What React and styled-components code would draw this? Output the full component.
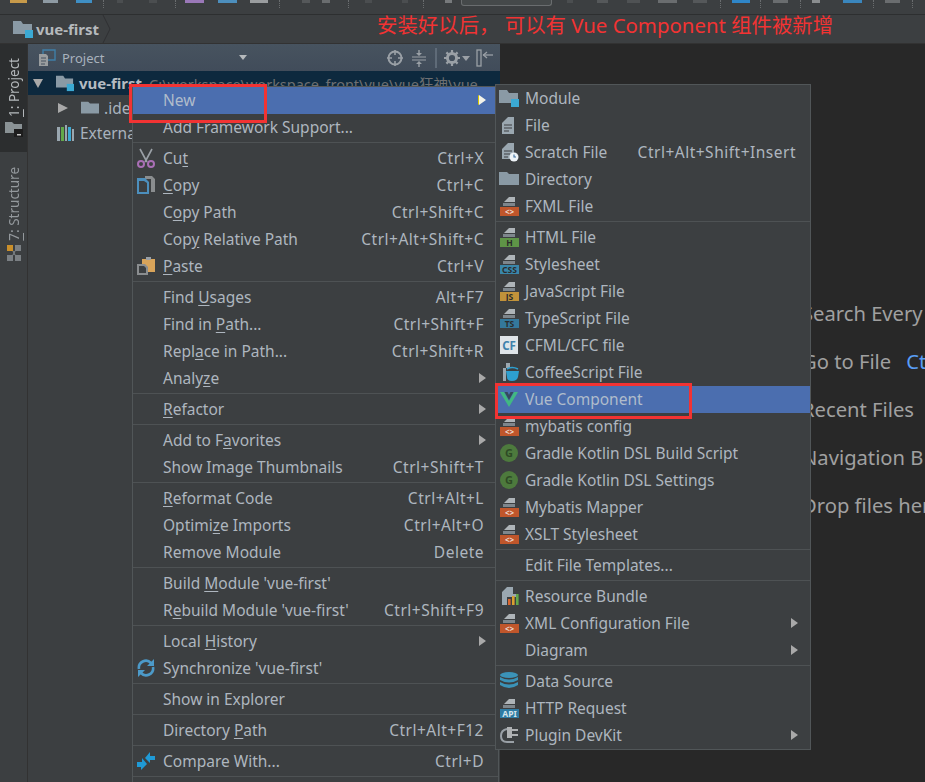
import React from "react";
import styled, { createGlobalStyle } from "styled-components";

const FONT = `"Noto Sans", "Open Sans", sans-serif`;

const GlobalStyle = createGlobalStyle`
  html, body {
    margin: 0;
    padding: 0;
    background: #282828;
    overflow: hidden;
  }
`;

const U = styled.span`
  text-decoration: underline;
  text-underline-offset: 2px;
`;

/* file-type icons */
const Doc = ({ color, label, fg = "#2b2b2b", size = 8.5 }) => (
  <svg width="20" height="20" viewBox="0 0 20 20">
    <path d="M10 1h6v5H5z" fill="#aeb4b8" />
    <rect x="4" y="7" width="12" height="3" fill="#7e868c" />
    <rect x="1" y="11" width="19" height="9" fill={color} />
    <text x="10.5" y="18.6" textAnchor="middle" fontSize={size} fontWeight="700" fontFamily={FONT} fill={fg}>
      {label}
    </text>
  </svg>
);

const XmlDoc = () => <Doc color="#c0562b" label="<>" fg="#ecd9cf" size={8} />;

const ModuleIcon = ({ size = 20 }) => (
  <svg width={size} height={size} viewBox="0 0 20 20">
    <path d="M0 2h8l2 3h9v10H0z" fill="#8a9aa5" />
    <rect x="12" y="11" width="8" height="8" fill="#3ba9d3" />
  </svg>
);

const FolderIcon = ({ size = 20 }) => (
  <svg width={size} height={size} viewBox="0 0 20 20">
    <path d="M0 3h8l2 2h10v11H0z" fill="#8a9aa5" />
  </svg>
);

const FileIcon = () => (
  <svg width="20" height="20" viewBox="0 0 20 20">
    <path d="M9 2h6v17H3V8z" fill="#9aa7b0" />
    <path d="M5 10h8M5 13h8M5 16h5" stroke="#3c3f41" strokeWidth="1.2" />
  </svg>
);

const ScratchIcon = () => (
  <svg width="20" height="20" viewBox="0 0 20 20">
    <path d="M9 1h6v16H3V7z" fill="#9aa7b0" />
    <path d="M5 9h8M5 12h6M5 15h4" stroke="#3c3f41" strokeWidth="1.2" />
    <circle cx="15" cy="15" r="4.5" fill="#eef3f7" />
    <path d="M15 12.5V15h2" stroke="#3c6e9e" strokeWidth="1.1" fill="none" />
  </svg>
);

const CfIcon = () => (
  <svg width="20" height="20" viewBox="0 0 20 20">
    <rect x="1" y="1" width="18" height="18" fill="#dfe4e8" />
    <text x="10" y="15" textAnchor="middle" fontSize="11.5" fontWeight="700" fontFamily={FONT} fill="#3f82ad">
      CF
    </text>
  </svg>
);

const CoffeeIcon = () => (
  <svg width="20" height="20" viewBox="0 0 20 20">
    <path d="M7 1h4v5H4v13h3z" fill="#9aa7b0" />
    <path d="M7 9h13l-1 6q-1 4-6 4t-5-4z" fill="#2d9fd0" />
    <path d="M8 7q5-3 11 0" stroke="#2d9fd0" strokeWidth="1.5" fill="none" />
  </svg>
);

const VueIcon = () => (
  <svg width="20" height="20" viewBox="0 0 20 20">
    <path d="M1 3h4l5 9 5-9h4L10 18z" fill="#41b883" />
    <path d="M5.5 3h3L10 6l1.5-3h3L10 11z" fill="#35495e" />
  </svg>
);

const GradleIcon = () => (
  <svg width="20" height="20" viewBox="0 0 20 20">
    <circle cx="10" cy="10" r="9" fill="#4d7a3d" />
    <text x="10" y="14" textAnchor="middle" fontSize="11" fontWeight="700" fontFamily={FONT} fill="#2e4a25">
      G
    </text>
  </svg>
);

const BundleIcon = () => (
  <svg width="20" height="20" viewBox="0 0 20 20">
    <path d="M8 1h6v7h5v3H8v8H3V6z" fill="#9aa7b0" />
    <rect x="9" y="13" width="2.6" height="6" fill="#d9662f" />
    <rect x="13" y="10" width="2.6" height="9" fill="#d9a030" />
    <rect x="17" y="8" width="2.6" height="11" fill="#62a84a" />
  </svg>
);

const DataIcon = () => (
  <svg width="20" height="20" viewBox="0 0 20 20">
    <g fill="#3b93b8">
      <ellipse cx="10" cy="4" rx="9" ry="3" />
      <path d="M1 6q9 5 18 0v3q-9 5-18 0z" />
      <path d="M1 11q9 5 18 0v3q-9 6-18 0z" />
    </g>
  </svg>
);

const PluginIcon = () => (
  <svg width="20" height="20" viewBox="0 0 20 20">
    <path d="M8 4q-6 1-6 7 0 6 6 6h7" stroke="#9aa0a6" strokeWidth="2" fill="none" />
    <path d="M8 2h5v11H8z" fill="#afb1b3" />
    <path d="M13 4h6v2h-6zM13 9h6v2h-6z" fill="#afb1b3" />
  </svg>
);

const CutIcon = () => (
  <svg width="20" height="20" viewBox="0 0 20 20">
    <path d="M4 1l7 13M16 1L9 14" stroke="#9aa0a6" strokeWidth="1.6" fill="none" />
    <circle cx="5" cy="16" r="3" fill="none" stroke="#a96fb5" strokeWidth="2" />
    <circle cx="15" cy="16" r="3" fill="none" stroke="#a96fb5" strokeWidth="2" />
  </svg>
);

const CopyIcon = () => (
  <svg width="20" height="20" viewBox="0 0 20 20">
    <path d="M9 1h7l3 3v13h-4V4H9z" fill="#8a8d8f" />
    <path d="M1 3h8l4 4v12H1z" fill="#4c8fbd" />
    <path d="M3 6h5l3 2v9H3z" fill="#3c3f41" />
  </svg>
);

const PasteIcon = () => (
  <svg width="20" height="20" viewBox="0 0 20 20">
    <rect x="6" y="3" width="13" height="13" fill="#d9a45a" />
    <rect x="10" y="1" width="5" height="3" fill="#9aa0a6" />
    <path d="M1 8h8l3 3v8H1z" fill="#8a8d8f" />
    <path d="M3 10h5l2 2v5H3z" fill="#3c3f41" />
  </svg>
);

const SyncIcon = () => (
  <svg width="20" height="20" viewBox="0 0 20 20">
    <path d="M3 11a7 7 0 0 1 12-6" stroke="#4c9ac9" strokeWidth="2.6" fill="none" />
    <path d="M17 9a7 7 0 0 1-12 6" stroke="#4c9ac9" strokeWidth="2.6" fill="none" />
    <path d="M18 1v7h-7zM2 19v-7h7z" fill="#4c9ac9" />
  </svg>
);

const CompareIcon = () => (
  <svg width="20" height="20" viewBox="0 0 20 20">
    <path d="M1 11h5V7l5 6-6 6v-3H1z" fill="#1f9ad6" />
    <path d="M19 5h-5V1L9 7l5 5V9h5z" fill="#1f9ad6" />
  </svg>
);

const LibIcon = () => (
  <svg width="18" height="18" viewBox="0 0 18 18">
    <rect x="0" y="3" width="3" height="14" fill="#9aa7b0" />
    <rect x="4" y="3" width="3" height="14" fill="#62a84a" />
    <rect x="8" y="1" width="2" height="16" fill="#9aa7b0" />
    <rect x="11" y="3" width="3" height="14" fill="#3ba9d3" />
    <rect x="15" y="5" width="2" height="12" fill="#9aa7b0" />
  </svg>
);

const StripFolder = () => (
  <svg width="18" height="16" viewBox="0 0 18 16">
    <path d="M0 1h7l2 2h8v9H0z" fill="#8a9295" />
    <rect x="9" y="8" width="9" height="8" fill="#1d1d1d" />
    <rect x="12" y="13" width="4" height="1.5" fill="#c8c8c8" />
  </svg>
);

const StructureIcon = () => (
  <svg width="16" height="16" viewBox="0 0 16 16">
    <rect x="1" y="0" width="6" height="6" fill="#c98f2b" />
    <path d="M9 0h6v6H9zM1 10h6v6H1zM9 10h6v6H9z" fill="#7b8084" />
    <path d="M7 6l2 4M9 6l-2 4" stroke="#7b8084" strokeWidth="1.2" />
  </svg>
);

const ProjectViewIcon = () => (
  <svg width="18" height="18" viewBox="0 0 18 18">
    <path d="M5 1h12v10H5z" fill="none" stroke="#3f7fa8" strokeWidth="1.4" />
    <path d="M1 5h7l2 2v10H1z" fill="#9a9d9f" />
    <path d="M3 9h5M3 12h5M3 15h4" stroke="#44505f" strokeWidth="1" />
  </svg>
);

const TargetIcon = () => (
  <svg width="18" height="18" viewBox="0 0 18 18">
    <circle cx="9" cy="9" r="6.5" fill="none" stroke="#9aa0a6" strokeWidth="2" />
    <path d="M9 1v5M9 12v5M1 9h5M12 9h5" stroke="#9aa0a6" strokeWidth="1.6" />
  </svg>
);

const CollapseIcon = () => (
  <svg width="18" height="18" viewBox="0 0 18 18">
    <path d="M2 8h14M2 11h14" stroke="#9aa0a6" strokeWidth="1" />
    <path d="M9 1v4M9 14v4" stroke="#9aa0a6" strokeWidth="1.4" />
    <path d="M6 4h6L9 7zM6 15h6l-3-3z" fill="#9aa0a6" />
  </svg>
);

const GearIcon = () => (
  <svg width="26" height="18" viewBox="0 0 26 18">
    <circle cx="8" cy="9" r="4.6" fill="none" stroke="#9aa0a6" strokeWidth="3" />
    <path
      d="M8 1v3M8 14v3M0 9h3M13 9h3M2.4 3.4l2 2M11.6 12.6l2 2M13.6 3.4l-2 2M4.4 12.6l-2 2"
      stroke="#9aa0a6"
      strokeWidth="2.2"
    />
    <path d="M18 7h8l-4 5z" fill="#9aa0a6" />
  </svg>
);

const HideIcon = () => (
  <svg width="18" height="18" viewBox="0 0 18 18">
    <rect x="1" y="1" width="4" height="16" fill="none" stroke="#9aa0a6" strokeWidth="1.3" />
    <path d="M7 6h10" stroke="#9aa0a6" strokeWidth="1.3" />
    <path d="M11 3 7.5 6 11 9" stroke="#9aa0a6" strokeWidth="1.3" fill="none" />
  </svg>
);

/* clipped toolbar above the nav bar: gap, width and colour of each stub */
const TOOLBAR = [
  { gap: 10, w: 17, c: "#c79a4a" },
  { gap: 16, w: 15, c: "#8e9aa3" },
  { gap: 18, w: 16, c: "#3f8fc4" },
  { gap: 11, sep: true },
  { gap: 13, w: 6, c: "#4b4e50" },
  { gap: 26, w: 8, c: "#4b4e50" },
  { gap: 18, sep: true },
  { gap: 9, w: 19, c: "#9a78b8" },
  { gap: 14, w: 19, c: "#4d8fbd" },
  { gap: 13, w: 18, c: "#9a9d9f" },
  { gap: 11, sep: true },
  { gap: 22, w: 8, c: "#55585a" },
  { gap: 12, w: 8, c: "#6a6d6f" },
  { gap: 18, sep: true },
  { gap: 16, w: 7, c: "#4b4e50" },
  { gap: 30, w: 6, c: "#4b4e50" },
  { gap: 15, sep: true },
  { gap: 21, w: 7, c: "#777a7c" },
  { gap: 9, input: true },
  { gap: 15, w: 6, c: "#4b4e50" },
  { gap: 24, w: 11, c: "#55585a" },
  { gap: 19, w: 13, c: "#4f5254" },
  { gap: 18, w: 19, c: "#6a6d6f" },
  { gap: 16, w: 14, c: "#55585a" },
  { gap: 13, sep: true },
  { gap: 11, w: 18, c: "#2f86c8" },
  { gap: 10, sep: true },
  { gap: 12, w: 15, c: "#6a6d6f" },
  { gap: 12, sep: true },
  { gap: 11, w: 8, c: "#8a8d8f" },
  { gap: 23, w: 19, c: "#3a86bd" },
  { gap: 11, sep: true },
  { gap: 11, w: 15, c: "#6a6d6f" },
  { gap: 12, sep: true },
];

const LEFT_MENU = [
  [
    { label: "New", active: true, arrow: true, cursor: true },
    { label: "Add Framework Support..." },
  ],
  [
    { icon: <CutIcon />, label: <>Cu<U>t</U></>, key_: "Ctrl+X" },
    { icon: <CopyIcon />, label: <><U>C</U>opy</>, key_: "Ctrl+C" },
    { label: <>C<U>o</U>py Path</>, key_: "Ctrl+Shift+C" },
    { label: <>Cop<U>y</U> Relative Path</>, key_: "Ctrl+Alt+Shift+C" },
    { icon: <PasteIcon />, label: <><U>P</U>aste</>, key_: "Ctrl+V" },
  ],
  [
    { label: <>Find <U>U</U>sages</>, key_: "Alt+F7" },
    { label: <>Find in <U>P</U>ath...</>, key_: "Ctrl+Shift+F" },
    { label: <>Repl<U>a</U>ce in Path...</>, key_: "Ctrl+Shift+R" },
    { label: <>Analy<U>z</U>e</>, arrow: true },
  ],
  [{ label: <><U>R</U>efactor</>, arrow: true }],
  [
    { label: <>Add to F<U>a</U>vorites</>, arrow: true },
    { label: "Show Image Thumbnails", key_: "Ctrl+Shift+T" },
  ],
  [
    { label: <><U>R</U>eformat Code</>, key_: "Ctrl+Alt+L" },
    { label: <>Optimi<U>z</U>e Imports</>, key_: "Ctrl+Alt+O" },
    { label: "Remove Module", key_: "Delete" },
  ],
  [
    { label: <>Build <U>M</U>odule 'vue-first'</> },
    { label: <>R<U>e</U>build Module 'vue-first'</>, key_: "Ctrl+Shift+F9" },
  ],
  [
    { label: <>Local <U>H</U>istory</>, arrow: true },
    { icon: <SyncIcon />, label: "Synchronize 'vue-first'" },
  ],
  [{ label: "Show in Explorer" }],
  [{ label: <>Directory <U>P</U>ath</>, key_: "Ctrl+Alt+F12" }],
  [{ icon: <CompareIcon />, label: "Compare With...", key_: "Ctrl+D" }],
  [],
];

const RIGHT_MENU = [
  [
    { icon: <ModuleIcon />, label: "Module" },
    { icon: <FileIcon />, label: "File" },
    { icon: <ScratchIcon />, label: "Scratch File", key_: "Ctrl+Alt+Shift+Insert" },
    { icon: <FolderIcon />, label: "Directory" },
    { icon: <XmlDoc />, label: "FXML File" },
  ],
  [
    { icon: <Doc color="#5f9447" label="H" />, label: "HTML File" },
    { icon: <Doc color="#3a87ab" label="CSS" />, label: "Stylesheet" },
    { icon: <Doc color="#c1923a" label="JS" />, label: "JavaScript File" },
    { icon: <Doc color="#34789c" label="TS" />, label: "TypeScript File" },
    { icon: <CfIcon />, label: "CFML/CFC file" },
    { icon: <CoffeeIcon />, label: "CoffeeScript File" },
    { icon: <VueIcon />, label: "Vue Component", active: true },
    { icon: <XmlDoc />, label: "mybatis config" },
    { icon: <GradleIcon />, label: "Gradle Kotlin DSL Build Script" },
    { icon: <GradleIcon />, label: "Gradle Kotlin DSL Settings" },
    { icon: <XmlDoc />, label: "Mybatis Mapper" },
    { icon: <XmlDoc />, label: "XSLT Stylesheet" },
  ],
  [{ label: "Edit File Templates..." }],
  [
    { icon: <BundleIcon />, label: "Resource Bundle" },
    { icon: <XmlDoc />, label: "XML Configuration File", arrow: true },
    { label: "Diagram", arrow: true },
  ],
  [
    { icon: <DataIcon />, label: "Data Source" },
    { icon: <Doc color="#2f7ba3" label="API" fg="#d5e4ec" />, label: "HTTP Request" },
    { icon: <PluginIcon />, label: "Plugin DevKit", arrow: true },
  ],
];

const HINTS = [
  { text: "Search Every" },
  { text: "Go to File", key_: "Ctrl" },
  { text: "Recent Files" },
  { text: "Navigation B" },
  { text: "Drop files her" },
];

const Menu = ({ groups, slot = 30, className }) => (
  <MenuBox className={className}>
    {groups.map((group, i) => (
      <MenuGroup key={i}>
        {group.map((item, j) => (
          <Row key={j} $active={item.active}>
            <IconSlot $w={slot}>{item.icon}</IconSlot>
            <Label>{item.label}</Label>
            {item.key_ && <Shortcut>{item.key_}</Shortcut>}
            {item.arrow && <Arrow $cursor={item.cursor} />}
          </Row>
        ))}
      </MenuGroup>
    ))}
  </MenuBox>
);

const App = () => {
  return (
    <Screen>
      <GlobalStyle />
      <TopToolbar>
        {TOOLBAR.map((t, i) => {
          if (t.sep) return <ToolSep key={i} $gap={t.gap} />;
          if (t.input) return <ToolInput key={i} $gap={t.gap} />;
          return <ToolStub key={i} $gap={t.gap} $w={t.w} $c={t.c} />;
        })}
      </TopToolbar>
      <NavBar>
        <ModuleIcon />
        <NavTitle>vue-first</NavTitle>
        <NavChevron width="10" height="28" viewBox="0 0 10 28">
          <path d="M1 0l7 14-7 14" fill="none" stroke="#2f3133" strokeWidth="1" />
        </NavChevron>
        <Note>安装好以后， 可以有 Vue Component 组件被新增</Note>
      </NavBar>
      <Main>
        <SideStrip>
          <SideTab $active>
            <SideLabel>
              <U>1</U>: Project
            </SideLabel>
            <StripFolder />
          </SideTab>
          <SideTab>
            <SideLabel>
              <U>7</U>: Structure
            </SideLabel>
            <StructureIcon />
          </SideTab>
        </SideStrip>
        <ProjectPanel>
          <PanelHeader>
            <ProjectViewIcon />
            <PanelTitle>Project</PanelTitle>
            <Caret />
            <PanelTools>
              <TargetIcon />
              <CollapseIcon />
              <ToolDivider />
              <GearIcon />
              <HideIcon />
            </PanelTools>
          </PanelHeader>
          <TreeRow $selected $indent={5}>
            <TreeArrow $open />
            <ModuleIcon size={18} />
            <TreeStrong>vue-first</TreeStrong>
            <TreePath>C:\workspace\workspace_front\vue\vue狂神\vue</TreePath>
          </TreeRow>
          <TreeRow $indent={30}>
            <TreeArrow />
            <FolderIcon size={18} />
            <TreeText>.idea</TreeText>
          </TreeRow>
          <TreeRow $indent={29}>
            <LibIcon />
            <TreeText>External Libraries</TreeText>
          </TreeRow>
        </ProjectPanel>
        <Editor>
          {HINTS.map((h) => (
            <Hint key={h.text}>
              {h.text}
              {h.key_ && <HintKey>{h.key_}</HintKey>}
            </Hint>
          ))}
        </Editor>
      </Main>
      <LeftMenu groups={LEFT_MENU} />
      <RightMenu groups={RIGHT_MENU} slot={29} />
      <NewMark />
      <VueMark />
    </Screen>
  );
};

const Screen = styled.div`
  position: relative;
  width: 925px;
  height: 782px;
  overflow: hidden;
  display: flex;
  flex-direction: column;
  font-family: ${FONT};
  background: #282828;
`;

const TopToolbar = styled.div`
  height: 14px;
  flex: none;
  display: flex;
  background: #3c3f41;
  border-bottom: 1px solid #2d2f30;
  overflow: hidden;
`;

const ToolStub = styled.span`
  flex: none;
  width: ${(p) => p.$w}px;
  height: 3px;
  margin-left: ${(p) => p.$gap}px;
  background: ${(p) => p.$c};
`;

const ToolSep = styled.span`
  flex: none;
  height: 8px;
  margin-left: ${(p) => p.$gap}px;
  border-left: 1px dotted #6a6d6f;
`;

const ToolInput = styled.span`
  flex: none;
  width: 91px;
  height: 6px;
  margin-left: ${(p) => p.$gap}px;
  box-sizing: border-box;
  border: 1px solid #6a6d6f;
  border-top: none;
  border-radius: 0 0 3px 3px;
  background: #45494a;
`;

const NavBar = styled.div`
  height: 28px;
  flex: none;
  display: flex;
  align-items: center;
  gap: 3px;
  padding-left: 13px;
  background: #3c3f41;
  border-bottom: 1px solid #323232;
`;

const NavTitle = styled.span`
  font-size: 15px;
  font-weight: 700;
  color: #b5b9bc;
`;

const NavChevron = styled.svg`
  flex: none;
`;

const Note = styled.span`
  margin: 0 0 11px 262px;
  font-size: 20.4px;
  color: #f23333;
  font-family: "Noto Sans", "Noto Sans CJK SC", sans-serif;
  white-space: nowrap;
`;

const Main = styled.div`
  flex: 1;
  display: flex;
  min-height: 0;
`;

const SideStrip = styled.div`
  width: 27px;
  flex: none;
  background: #3c3f41;
  border-right: 1px solid #323232;
`;

const SideTab = styled.div`
  height: ${(p) => (p.$active ? "108px" : "118px")};
  box-sizing: border-box;
  padding-top: ${(p) => (p.$active ? "14px" : "15px")};
  display: flex;
  flex-direction: column;
  align-items: center;
  gap: 4px;
  background: ${(p) => (p.$active ? "#2c2e2f" : "transparent")};
  color: ${(p) => (p.$active ? "#b4b8bb" : "#94999d")};
`;

const SideLabel = styled.span`
  writing-mode: vertical-rl;
  transform: rotate(180deg);
  font-size: 13.5px;
  white-space: nowrap;
`;

const ProjectPanel = styled.div`
  width: 472px;
  flex: none;
  background: #3c3f41;
`;

const PanelHeader = styled.div`
  height: 27px;
  display: flex;
  align-items: center;
  gap: 6px;
  padding-left: 10px;
  background: linear-gradient(#47535f, #414c5a);
`;

const PanelTitle = styled.span`
  width: 171px;
  flex: none;
  font-size: 13px;
  color: #a9b2bd;
`;

const Caret = styled.span`
  width: 0;
  height: 0;
  border-left: 4px solid transparent;
  border-right: 4px solid transparent;
  border-top: 5px solid #b5b9bc;
`;

const PanelTools = styled.div`
  margin-left: auto;
  display: flex;
  align-items: center;
  gap: 6px;
  padding-right: 6px;
`;

const ToolDivider = styled.span`
  width: 2px;
  height: 20px;
  margin: 0 1px;
  background: #5f6b78;
`;

const TreeRow = styled.div`
  height: ${(p) => (p.$selected ? "24px" : "25px")};
  display: flex;
  align-items: center;
  gap: 5px;
  padding-left: ${(p) => p.$indent}px;
  background: ${(p) => (p.$selected ? "#0d293e" : "transparent")};
  white-space: nowrap;
  overflow: hidden;
`;

const TreeArrow = styled.span`
  width: 0;
  height: 0;
  margin-right: 8px;
  ${(p) =>
    p.$open
      ? `border-left: 5.5px solid transparent; border-right: 5.5px solid transparent; border-top: 9px solid #a9a9a9;`
      : `border-top: 5px solid transparent; border-bottom: 5px solid transparent; border-left: 10px solid #a9a9a9;`}
`;

const TreeStrong = styled.span`
  font-size: 15px;
  font-weight: 700;
  color: #b5bcc2;
`;

const TreeText = styled.span`
  font-size: 15.5px;
  color: #a9b2bd;
`;

const TreePath = styled.span`
  margin-left: 2px;
  font-size: 14.5px;
  color: #6e7072;
  font-family: "Noto Sans", "Noto Sans CJK SC", sans-serif;
`;

const Editor = styled.div`
  flex: 1;
  display: flex;
  flex-direction: column;
  gap: 20px;
  padding: 255px 0 0 302px;
  background: #282828;
  overflow: hidden;
`;

const Hint = styled.div`
  height: 28px;
  line-height: 28px;
  font-size: 20.2px;
  color: #a0a0a0;
  white-space: nowrap;
`;

const HintKey = styled.span`
  margin-left: 15px;
  color: #589df6;
`;

const MenuBox = styled.div`
  position: absolute;
  background: #3c3f41;
  border: 1px solid #515658;
  box-sizing: border-box;
`;

const LeftMenu = styled(Menu)`
  left: 132px;
  top: 86px;
  width: 367px;
  height: 700px;
`;

const RightMenu = styled(Menu)`
  left: 495px;
  top: 84px;
  width: 316px;
  height: 666px;
`;

const MenuGroup = styled.div`
  padding-bottom: 1px;
  border-bottom: 1px solid #4e5254;
  margin-bottom: 2px;
  &:last-child {
    border-bottom: none;
    margin-bottom: 0;
  }
`;

const Row = styled.div`
  height: 27px;
  box-sizing: border-box;
  padding: 0 14px 2px 0;
  display: flex;
  align-items: center;
  background: ${(p) => (p.$active ? "#4b6eaf" : "transparent")};
  color: ${(p) => (p.$active ? "#b0bccb" : "#aeb6bf")};
  font-size: 15.5px;
  white-space: nowrap;
`;

const IconSlot = styled.span`
  width: ${(p) => p.$w}px;
  flex: none;
  display: flex;
  padding-left: 3px;
  box-sizing: border-box;
`;

const Label = styled.span`
  flex: 1;
`;

const Shortcut = styled.span`
  margin-left: 24px;
  letter-spacing: 0.5px;
`;

const Arrow = styled.span`
  width: 0;
  height: 0;
  margin-right: -2px;
  border-top: 5px solid transparent;
  border-bottom: 5px solid transparent;
  border-left: 7px solid ${(p) => (p.$cursor ? "#f2f2ea" : "#a9a9a9")};
  ${(p) => p.$cursor && "filter: drop-shadow(-1px 0 0 #d8c800);"}
`;

const NewMark = styled.div`
  position: absolute;
  left: 129px;
  top: 84px;
  width: 138px;
  height: 39px;
  box-sizing: border-box;
  border: 3px solid #f23333;
`;

const VueMark = styled.div`
  position: absolute;
  left: 495px;
  top: 383px;
  width: 197px;
  height: 36px;
  box-sizing: border-box;
  border: 3px solid #f23333;
`;

export default App;
